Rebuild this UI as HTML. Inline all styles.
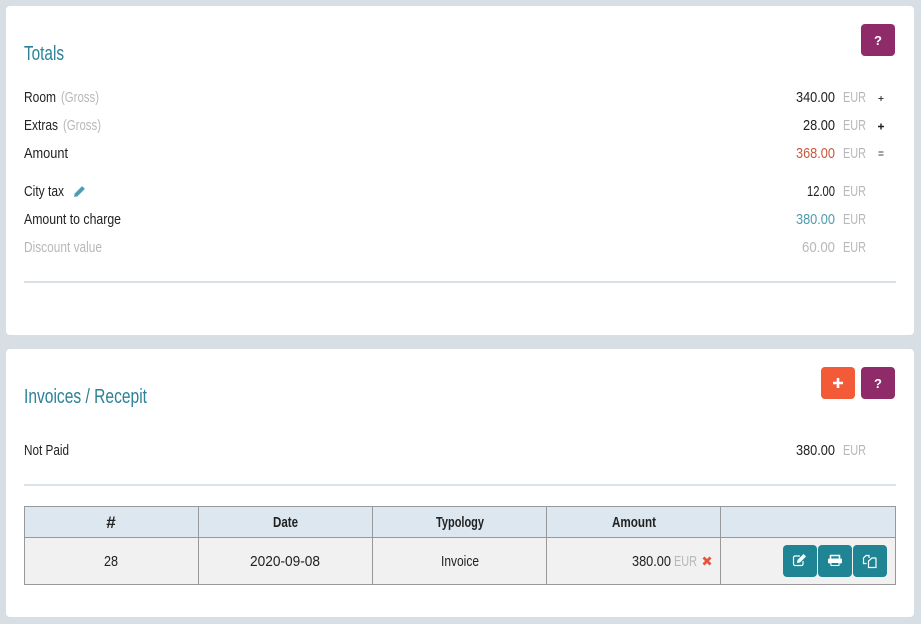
<!DOCTYPE html>
<html><head><meta charset="utf-8"><style>
html,body{margin:0;padding:0;width:921px;height:624px;overflow:hidden;background:#d7dee4}
svg{display:block}
text{font-family:"Liberation Sans",sans-serif;font-size:15px;fill:#222}
.h{font-size:20px;fill:#2b8197}
.g{fill:#b8b8b8}
.b{font-weight:bold;fill:#222;font-size:14.500px}
</style></head><body>
<svg width="921" height="624" viewBox="0 0 921 624" xmlns="http://www.w3.org/2000/svg">
<rect x="6" y="6" width="908" height="329" rx="4" fill="#fff"/>
<rect x="6" y="349" width="908" height="268" rx="4" fill="#fff"/>

<text class="h" x="24" y="60" textLength="40" lengthAdjust="spacingAndGlyphs">Totals</text>
<rect x="861" y="24" width="34" height="32" rx="4" fill="#8e2b68"/>
<text x="878" y="45" text-anchor="middle" style="font-weight:bold;font-size:13px;fill:#fff">?</text>

<text x="24" y="102" textLength="32" lengthAdjust="spacingAndGlyphs">Room</text>
<text class="g" x="61" y="102" textLength="38" lengthAdjust="spacingAndGlyphs">(Gross)</text>
<text x="24" y="130" textLength="34" lengthAdjust="spacingAndGlyphs">Extras</text>
<text class="g" x="63" y="130" textLength="38" lengthAdjust="spacingAndGlyphs">(Gross)</text>
<text x="24" y="158" textLength="44" lengthAdjust="spacingAndGlyphs">Amount</text>
<text x="24" y="196" textLength="40" lengthAdjust="spacingAndGlyphs">City tax</text>
<path d="M75.500 195.500l8-8" stroke="#4f9bb5" stroke-width="4" fill="none"/>
<path d="M74 197l.8-3.200 2.400 2.400z" fill="#4f9bb5"/>
<text x="24" y="224" textLength="97" lengthAdjust="spacingAndGlyphs">Amount to charge</text>
<text class="g" x="24" y="252" textLength="78" lengthAdjust="spacingAndGlyphs">Discount value</text>

<text x="796" y="102" textLength="39" lengthAdjust="spacingAndGlyphs">340.00</text>
<text class="g" x="843" y="102" textLength="23" lengthAdjust="spacingAndGlyphs">EUR</text>
<text x="803" y="130" textLength="32" lengthAdjust="spacingAndGlyphs">28.00</text>
<text class="g" x="843" y="130" textLength="23" lengthAdjust="spacingAndGlyphs">EUR</text>
<text x="796" y="158" textLength="39" lengthAdjust="spacingAndGlyphs" style="fill:#c9573f">368.00</text>
<text class="g" x="843" y="158" textLength="23" lengthAdjust="spacingAndGlyphs">EUR</text>
<text x="807" y="196" textLength="28" lengthAdjust="spacingAndGlyphs">12.00</text>
<text class="g" x="843" y="196" textLength="23" lengthAdjust="spacingAndGlyphs">EUR</text>
<text x="796" y="224" textLength="39" lengthAdjust="spacingAndGlyphs" style="fill:#4f9bb0">380.00</text>
<text class="g" x="843" y="224" textLength="23" lengthAdjust="spacingAndGlyphs">EUR</text>
<text class="g" x="802" y="252" textLength="33" lengthAdjust="spacingAndGlyphs">60.00</text>
<text class="g" x="843" y="252" textLength="23" lengthAdjust="spacingAndGlyphs">EUR</text>

<path d="M878.500 98.500h5M881 96v5" stroke="#333" stroke-width="1" fill="none"/>
<path d="M878 126.500h6M881 123.500v6" stroke="#222" stroke-width="1.400" fill="none"/>
<path d="M878.500 152h5M878.500 155h5" stroke="#444" stroke-width="1" fill="none"/>

<rect x="24" y="281" width="872" height="2" fill="#d9e1e6"/>

<text class="h" x="24" y="403" textLength="123" lengthAdjust="spacingAndGlyphs">Invoices / Recepit</text>
<rect x="821" y="367" width="34" height="32" rx="4" fill="#f25a38"/>
<path d="M833 383h10M838 378v10" stroke="#fff" stroke-width="2.600" fill="none"/>
<rect x="861" y="367" width="34" height="32" rx="4" fill="#8e2b68"/>
<text x="878" y="388" text-anchor="middle" style="font-weight:bold;font-size:13px;fill:#fff">?</text>

<text x="24" y="455" textLength="45" lengthAdjust="spacingAndGlyphs">Not Paid</text>
<text x="796" y="455" textLength="39" lengthAdjust="spacingAndGlyphs">380.00</text>
<text class="g" x="843" y="455" textLength="23" lengthAdjust="spacingAndGlyphs">EUR</text>
<rect x="24" y="484" width="872" height="2" fill="#d9e4ea"/>

<rect x="24.500" y="506.500" width="871" height="78" fill="#f1f1f1" stroke="#999"/>
<rect x="25" y="507" width="870" height="30.500" fill="#dce7ef"/>
<path d="M24.500 537.500H895.500M198.500 506.500V584.500M372.500 506.500V584.500M546.500 506.500V584.500M720.500 506.500V584.500" stroke="#999" fill="none"/>

<text class="b" x="111" y="528" text-anchor="middle" style="font-size:17px">#</text>
<text class="b" x="273" y="527" textLength="25" lengthAdjust="spacingAndGlyphs">Date</text>
<text class="b" x="436" y="527" textLength="48" lengthAdjust="spacingAndGlyphs">Typology</text>
<text class="b" x="612" y="527" textLength="44" lengthAdjust="spacingAndGlyphs">Amount</text>

<text x="104" y="566" textLength="14" lengthAdjust="spacingAndGlyphs">28</text>
<text x="250" y="566" textLength="70" lengthAdjust="spacingAndGlyphs">2020-09-08</text>
<text x="441" y="566" textLength="38" lengthAdjust="spacingAndGlyphs">Invoice</text>
<text x="632" y="566" textLength="39" lengthAdjust="spacingAndGlyphs">380.00</text>
<text class="g" x="674" y="566" textLength="23" lengthAdjust="spacingAndGlyphs">EUR</text>
<path d="M703.500 557.500l7 7M710.500 557.500l-7 7" stroke="#e4553c" stroke-width="2.800" fill="none"/>

<rect x="783" y="545" width="34" height="32" rx="4" fill="#1f8494"/>
<rect x="818" y="545" width="34" height="32" rx="4" fill="#1f8494"/>
<rect x="853" y="545" width="34" height="32" rx="4" fill="#1f8494"/>
<path d="M800 556h-5a1.500 1.500 0 0 0-1.500 1.500v6.500a1.500 1.500 0 0 0 1.500 1.500h6.500a1.500 1.500 0 0 0 1.500-1.500v-3" stroke="#fff" stroke-width="1.200" fill="none"/>
<path d="M797 563l.5-3 6-6 2.500 2.500-6 6z" fill="#fff"/>
<path d="M830.500 559v-3.500h9v3.500" stroke="#fff" stroke-width="1.500" fill="none"/>
<rect x="828" y="558.500" width="14" height="5" rx="1.200" fill="#fff"/>
<rect x="831" y="562.500" width="8" height="3" fill="#1f8494" stroke="#fff"/>
<path d="M869 558v-2.500h-3l-2.500 2.500v5.500h3" stroke="#fff" stroke-width="1.200" fill="none"/>
<path d="M870 558h3.500a.5.500 0 0 1 .5.500v9h-7.500v-6.500z" transform="translate(2 0)" stroke="#fff" stroke-width="1.200" fill="none"/>
</svg>
</body></html>
